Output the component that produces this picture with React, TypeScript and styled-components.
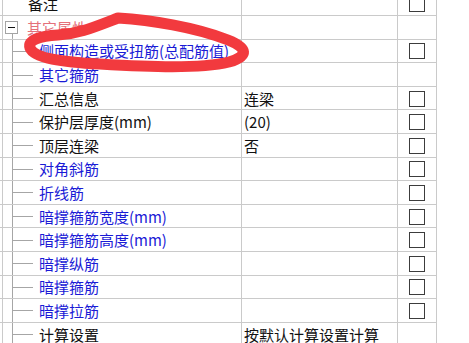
import React from "react";
import styled, { createGlobalStyle } from "styled-components";

const GlobalStyle = createGlobalStyle`
  html, body { margin: 0; padding: 0; background: #ffffff; }
  body { font-family: "Noto Sans CJK SC", "Noto Sans", sans-serif; }
`;

const LINE = "#cacaca";
const TREE = "#a6a6a6";

const Viewport = styled.div`
  position: relative;
  width: 469px;
  height: 343px;
  overflow: hidden;
  background: #fff;
`;

const Table = styled.div`
  margin-top: -7.5px;
  width: 437px;
  display: flex;
  flex-direction: column;
`;

const Row = styled.div`
  display: grid;
  grid-template-columns: 242px 156px 39px;
  height: 23.6px;
  box-sizing: border-box;
  border-bottom: 1px solid ${LINE};
`;

const NameCell = styled.div`
  display: flex;
  align-items: center;
  height: 100%;
  min-width: 0;
  border-right: 1px solid ${LINE};
  background: linear-gradient(${LINE}, ${LINE}) 2px 0 / 1px 100% no-repeat;
`;

const ValueCell = styled.div`
  display: flex;
  align-items: center;
  height: 100%;
  padding-left: 2px;
  border-right: 1px solid ${LINE};
  font-size: 15px;
  color: #111;
  white-space: nowrap;
  overflow: hidden;
`;

const CheckCell = styled.div`
  display: flex;
  align-items: center;
  justify-content: center;
  height: 100%;
  border-right: 1px solid ${LINE};
`;

const Check = styled.span`
  display: block;
  width: 16px;
  height: 16px;
  box-sizing: border-box;
  border: 1px solid #3c3c3c;
  background: #fff;
  margin-top: 1px;
`;

const Spacer = styled.span<{ $w: number }>`
  flex: 0 0 ${(p) => p.$w}px;
  height: 100%;
`;

const Branch = styled.span`
  flex: 0 0 39px;
  height: 100%;
  background:
    linear-gradient(${TREE}, ${TREE}) 12px 0 / 1px 100% no-repeat,
    linear-gradient(${TREE}, ${TREE}) 13px 52% / 20px 1px no-repeat;
`;

const ToggleSlot = styled.span`
  flex: 0 0 27px;
  height: 100%;
  display: flex;
  align-items: center;
  background: linear-gradient(${TREE}, ${TREE}) 12px 100% / 1px 30% no-repeat;
`;

const ToggleBox = styled.span`
  position: relative;
  width: 13px;
  height: 13px;
  margin-left: 5px;
  box-sizing: border-box;
  border: 1px solid #a4a4a4;
  background: #fff;
  &::after {
    content: "";
    position: absolute;
    left: 2px;
    right: 2px;
    top: 5px;
    height: 1px;
    background: #111;
  }
`;

const Label = styled.span<{ $tone: "black" | "blue" | "red" }>`
  font-size: 15px;
  white-space: nowrap;
  color: ${(p) =>
    p.$tone === "blue" ? "#1a1ad6" : p.$tone === "red" ? "#e4707a" : "#111"};
`;

const Scribble = styled.svg`
  position: absolute;
  left: 0;
  top: 0;
  pointer-events: none;
`;

type Item = {
  name: string;
  kind: "top" | "group" | "child";
  tone: "black" | "blue" | "red";
  value?: string;
  check: boolean;
};

const rows: Item[] = [
  { name: "备注", kind: "top", tone: "black", check: true },
  { name: "其它属性", kind: "group", tone: "red", check: false },
  { name: "侧面构造或受扭筋(总配筋值)", kind: "child", tone: "blue", check: true },
  { name: "其它箍筋", kind: "child", tone: "blue", check: false },
  { name: "汇总信息", kind: "child", tone: "black", value: "连梁", check: true },
  { name: "保护层厚度(mm)", kind: "child", tone: "black", value: "(20)", check: true },
  { name: "顶层连梁", kind: "child", tone: "black", value: "否", check: true },
  { name: "对角斜筋", kind: "child", tone: "blue", check: true },
  { name: "折线筋", kind: "child", tone: "blue", check: true },
  { name: "暗撑箍筋宽度(mm)", kind: "child", tone: "blue", check: true },
  { name: "暗撑箍筋高度(mm)", kind: "child", tone: "blue", check: true },
  { name: "暗撑纵筋", kind: "child", tone: "blue", check: true },
  { name: "暗撑箍筋", kind: "child", tone: "blue", check: true },
  { name: "暗撑拉筋", kind: "child", tone: "blue", check: true },
  { name: "计算设置", kind: "child", tone: "black", value: "按默认计算设置计算", check: false },
];

function Lead({ kind }: { kind: Item["kind"] }) {
  if (kind === "group")
    return (
      <ToggleSlot>
        <ToggleBox />
      </ToggleSlot>
    );
  if (kind === "child") return <Branch />;
  return <Spacer $w={28} />;
}

export default function App() {
  return (
    <>
      <GlobalStyle />
      <Viewport>
        <Table>
          {rows.map((r, i) => (
            <Row key={i}>
              <NameCell>
                <Lead kind={r.kind} />
                <Label $tone={r.tone}>{r.name}</Label>
              </NameCell>
              <ValueCell>{r.value ?? ""}</ValueCell>
              <CheckCell>{r.check ? <Check /> : null}</CheckCell>
            </Row>
          ))}
        </Table>
        <Scribble width="469" height="343" viewBox="0 0 469 343">
          <path
            d="M 118 18 C 150 20, 195 27, 228 40 C 248 48, 249 56, 229 62 C 200 69, 150 67, 100 64 C 62 62, 34 58, 30 48 C 27 40, 40 36, 58 35 C 78 34, 92 28, 118 18 Z"
            fill="none"
            stroke="#f23a3e"
            strokeWidth="11"
            strokeLinejoin="round"
            strokeLinecap="round"
          />
        </Scribble>
      </Viewport>
    </>
  );
}
